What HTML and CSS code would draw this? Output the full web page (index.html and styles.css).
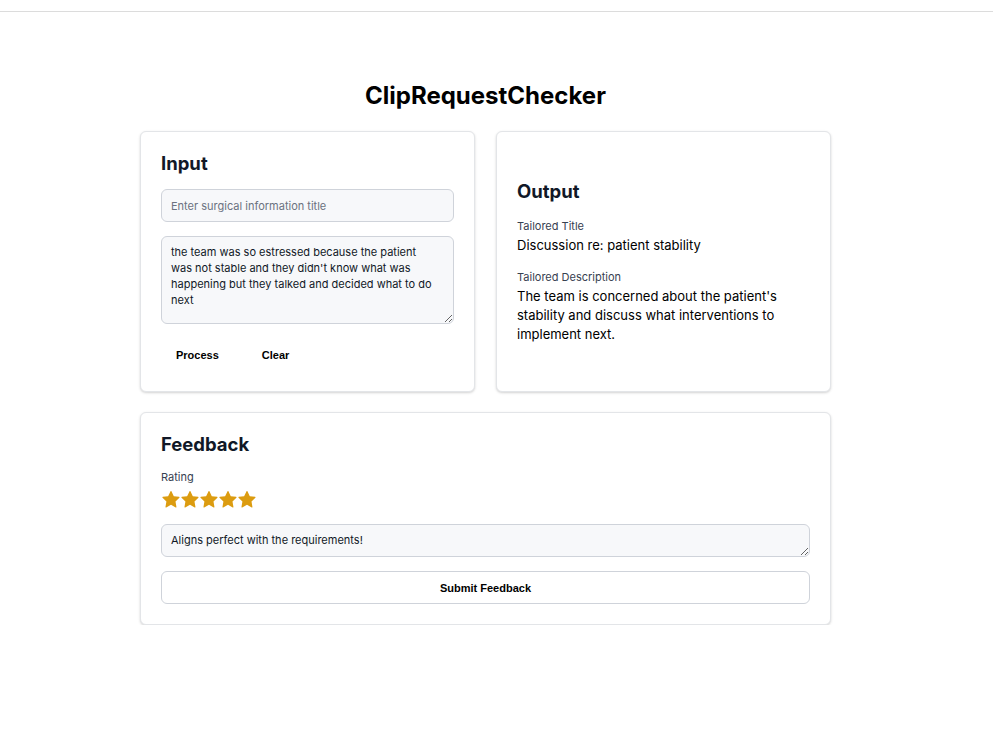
FILE: index.html
```html
<!DOCTYPE html>
<html lang="en">
<head>
<meta charset="utf-8">
<title>ClipRequestChecker</title>
<link rel="stylesheet" href="styles.css">
</head>
<body>
<div class="topbar"></div>
<main class="page">
  <h1 class="title">ClipRequestChecker</h1>
  <div class="grid">
    <section class="card input-card">
      <h2 class="card-title">Input</h2>
      <input class="field" type="text" placeholder="Enter surgical information title">
      <textarea class="field area">the team was so estressed because the patient was not stable and they didn't know what was happening but they talked and decided what to do next</textarea>
      <div class="actions">
        <button class="btn">Process</button>
        <button class="btn">Clear</button>
      </div>
    </section>
    <section class="card output-card">
      <h2 class="card-title">Output</h2>
      <div class="label">Tailored Title</div>
      <p class="value">Discussion re: patient stability</p>
      <div class="label">Tailored Description</div>
      <p class="value">The team is concerned about the patient's stability and discuss what interventions to implement next.</p>
    </section>
  </div>
  <section class="card feedback-card">
    <h2 class="card-title">Feedback</h2>
    <div class="label rating-label">Rating</div>
    <div class="stars">
      <svg viewBox="2 2 20 20"><path d="M11.5 2.3a.6.6 0 0 1 1 0l2.6 5.4 5.9.8a.6.6 0 0 1 .3 1l-4.3 4.2 1 5.9a.6.6 0 0 1-.8.6L12 17.4l-5.3 2.8a.6.6 0 0 1-.8-.6l1-5.9-4.3-4.2a.6.6 0 0 1 .3-1l5.9-.8z"/></svg>
      <svg viewBox="2 2 20 20"><path d="M11.5 2.3a.6.6 0 0 1 1 0l2.6 5.4 5.9.8a.6.6 0 0 1 .3 1l-4.3 4.2 1 5.9a.6.6 0 0 1-.8.6L12 17.4l-5.3 2.8a.6.6 0 0 1-.8-.6l1-5.9-4.3-4.2a.6.6 0 0 1 .3-1l5.9-.8z"/></svg>
      <svg viewBox="2 2 20 20"><path d="M11.5 2.3a.6.6 0 0 1 1 0l2.6 5.4 5.9.8a.6.6 0 0 1 .3 1l-4.3 4.2 1 5.9a.6.6 0 0 1-.8.6L12 17.4l-5.3 2.8a.6.6 0 0 1-.8-.6l1-5.9-4.3-4.2a.6.6 0 0 1 .3-1l5.9-.8z"/></svg>
      <svg viewBox="2 2 20 20"><path d="M11.5 2.3a.6.6 0 0 1 1 0l2.6 5.4 5.9.8a.6.6 0 0 1 .3 1l-4.3 4.2 1 5.9a.6.6 0 0 1-.8.6L12 17.4l-5.3 2.8a.6.6 0 0 1-.8-.6l1-5.9-4.3-4.2a.6.6 0 0 1 .3-1l5.9-.8z"/></svg>
      <svg viewBox="2 2 20 20"><path d="M11.5 2.3a.6.6 0 0 1 1 0l2.6 5.4 5.9.8a.6.6 0 0 1 .3 1l-4.3 4.2 1 5.9a.6.6 0 0 1-.8.6L12 17.4l-5.3 2.8a.6.6 0 0 1-.8-.6l1-5.9-4.3-4.2a.6.6 0 0 1 .3-1l5.9-.8z"/></svg>
    </div>
    <textarea class="field feedback-area">Aligns perfect with the requirements!</textarea>
    <button class="submit">Submit Feedback</button>
  </section>
</main>
</body>
</html>
```

FILE: styles.css
```css
* { box-sizing: border-box; }
html, body { margin: 0; padding: 0; background: #fff; }
body { font-family: Inter, "Noto Sans", sans-serif; color: #111827; }

.topbar { height: 12px; border-bottom: 1px solid #dcdcdc; }

.page {
  width: 691px;
  margin: 0 0 0 140px;
  padding-top: 68px;
}

.title {
  margin: 0 0 19px;
  text-align: center;
  font-size: 24px;
  line-height: 32px;
  font-weight: 700;
  color: #000;
}

.grid {
  display: grid;
  grid-template-columns: 1fr 1fr;
  gap: 21px;
}

.card {
  background: #fff;
  border: 1px solid #e3e5e8;
  border-radius: 6px;
  box-shadow: 0 1px 3px rgba(0,0,0,0.12), 0 1px 2px rgba(0,0,0,0.06);
  padding: 20px;
}

.input-card, .output-card { height: 261px; }

.card-title {
  margin: 0;
  font-size: 18.5px;
  line-height: 22px;
  font-weight: 700;
  color: #111827;
}

.input-card { display: flex; flex-direction: column; }
.input-card .card-title { margin-bottom: 15px; }

.field {
  display: block;
  width: 100%;
  font-family: Inter, "Noto Sans", sans-serif;
  font-size: 11px;
  color: #111827;
  background: #f7f8fa;
  border: 1px solid #cfd3da;
  border-radius: 6px;
  padding: 0 9px;
  height: 33px;
  outline: none;
}
.field::placeholder { color: #6b7280; }

.area {
  margin-top: 14px;
  height: 88px;
  padding: 7px 14px 7px 9px;
  line-height: 16px;
  resize: vertical;
}

.actions {
  display: flex;
  gap: 13px;
  margin-top: 16px;
}

.btn {
  height: 30px;
  padding: 0 15px;
  background: transparent;
  border: none;
  font-family: "Liberation Sans", Arial, sans-serif;
  font-size: 11px;
  font-weight: 700;
  color: #000;
}

.output-card {
  display: flex;
  flex-direction: column;
  justify-content: center;
}
.output-card .card-title { margin-bottom: 16px; }

.label {
  font-size: 11px;
  line-height: 16px;
  color: #374151;
}

.value {
  margin: 2px 0 14px;
  font-size: 13px;
  line-height: 19px;
  color: #000;
}
.value:last-child { margin-bottom: 0; }

.feedback-card {
  margin-top: 20px;
}
.feedback-card .card-title { margin-bottom: 14px; }

.rating-label { margin-bottom: 6px; }

.stars {
  display: flex;
  gap: 1px;
  height: 18px;
  margin-left: 1px;
  margin-bottom: 15px;
}
.stars svg { width: 18px; height: 18px; fill: #dc9c10; }

.feedback-area {
  height: 33px;
  padding: 7px 9px;
  line-height: 16px;
  resize: vertical;
}

.submit {
  display: block;
  width: 100%;
  height: 33px;
  margin-top: 14px;
  background: #fff;
  border: 1px solid #cfd3da;
  border-radius: 6px;
  font-family: "Liberation Sans", Arial, sans-serif;
  font-size: 11px;
  font-weight: 700;
  color: #000;
}
```
